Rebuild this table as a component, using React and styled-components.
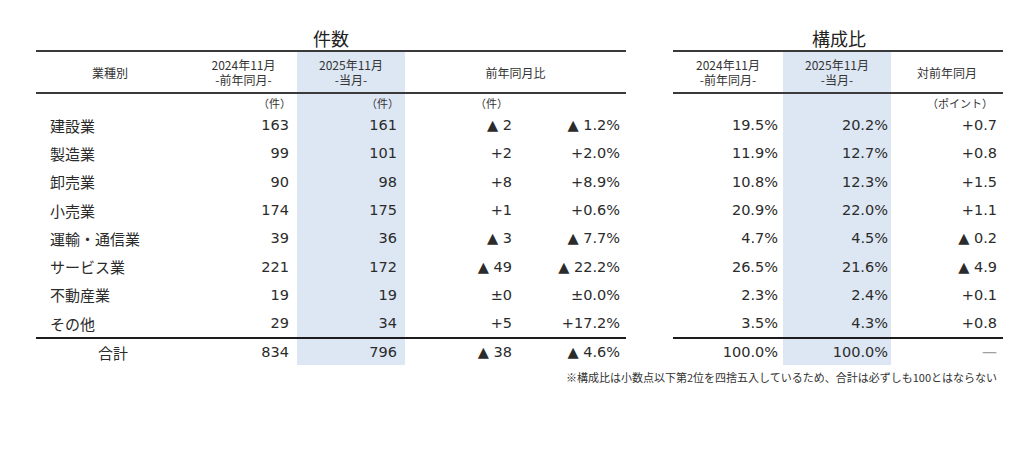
import React from "react";
import styled, { createGlobalStyle } from "styled-components";

const GlobalStyle = createGlobalStyle`
  html, body {
    margin: 0;
    background: #fff;
  }
  body {
    font-family: "DejaVu Sans", "Noto Sans CJK JP", sans-serif;
    color: #2b2b2b;
  }
`;

const JP = `"Noto Sans CJK JP", "Noto Sans", sans-serif`;
const NUM = `"DejaVu Sans", "Noto Sans CJK JP", sans-serif`;
const BLUE = "#dde7f3";

const Page = styled.div`
  width: 1034px;
  height: 452px;
  padding: 26px 0 0 36px;
  box-sizing: border-box;
`;

const Tables = styled.div`
  display: flex;
  gap: 47px;
`;

const Block = styled.div`
  display: flex;
  flex-direction: column;
`;

const Title = styled.div`
  height: 24px;
  line-height: 24px;
  text-align: center;
  font-family: ${JP};
  font-size: 18px;
  font-weight: 400;
  color: #222;
  padding-left: ${(p) => p.$shift || 0}px;
`;

const Row = styled.div`
  display: grid;
  grid-template-columns: ${(p) => p.$cols};
`;

const HeadRow = styled(Row)`
  height: 40px;
  border-top: 2px solid #3a3a3a;
  border-bottom: 2px solid #3a3a3a;
  font-family: ${JP};
  font-size: 12px;
  line-height: 15px;
  color: #333;
`;

const UnitRow = styled(Row)`
  height: 17px;
  font-family: ${JP};
  font-size: 11px;
  color: #333;
`;

const DataRow = styled(Row)`
  height: 28.3px;
  font-family: ${NUM};
  font-size: 14.5px;
`;

const TotalRow = styled(Row)`
  height: 26px;
  border-top: 2.5px solid #1c1c1c;
  font-family: ${NUM};
  font-size: 14.5px;
`;

const Cell = styled.div`
  display: flex;
  align-items: center;
  justify-content: ${(p) =>
    p.$align === "left" ? "flex-start" : p.$align === "center" ? "center" : "flex-end"};
  text-align: center;
  padding: 0 ${(p) => p.$pr || 0}px 0 ${(p) => p.$pl || 0}px;
  grid-column: ${(p) => (p.$span ? `span ${p.$span}` : "auto")};
  background: ${(p) => (p.$blue ? BLUE : "transparent")};
  white-space: nowrap;
`;

const Label = styled(Cell)`
  font-family: ${JP};
  font-size: 15px;
  color: #2b2b2b;
`;

const Dash = styled.span`
  color: #a0a0a0;
  font-family: ${NUM};
  font-size: 15px;
`;

const Note = styled.div`
  width: 967px;
  margin-top: 4px;
  padding-right: 6px;
  box-sizing: border-box;
  text-align: right;
  font-family: ${JP};
  font-size: 11px;
  line-height: 16px;
  color: #333;
`;

const LEFT_COLS = "154px 107px 108px 107px 114px";
const RIGHT_COLS = "110px 108px 112px";

const rows = [
  ["建設業", "163", "161", "▲ 2", "▲ 1.2%", "19.5%", "20.2%", "+0.7"],
  ["製造業", "99", "101", "+2", "+2.0%", "11.9%", "12.7%", "+0.8"],
  ["卸売業", "90", "98", "+8", "+8.9%", "10.8%", "12.3%", "+1.5"],
  ["小売業", "174", "175", "+1", "+0.6%", "20.9%", "22.0%", "+1.1"],
  ["運輸・通信業", "39", "36", "▲ 3", "▲ 7.7%", "4.7%", "4.5%", "▲ 0.2"],
  ["サービス業", "221", "172", "▲ 49", "▲ 22.2%", "26.5%", "21.6%", "▲ 4.9"],
  ["不動産業", "19", "19", "±0", "±0.0%", "2.3%", "2.4%", "+0.1"],
  ["その他", "29", "34", "+5", "+17.2%", "3.5%", "4.3%", "+0.8"],
];

const CountTable = () => (
  <Block>
    <Title>件数</Title>
    <HeadRow $cols={LEFT_COLS}>
      <Cell $align="center" $pr={6}>業種別</Cell>
      <Cell $align="center">
        2024年11月
        <br />
        -前年同月-
      </Cell>
      <Cell $align="center" $blue>
        2025年11月
        <br />
        -当月-
      </Cell>
      <Cell $align="center" $span={2}>前年同月比</Cell>
    </HeadRow>
    <UnitRow $cols={LEFT_COLS}>
      <Cell />
      <Cell $pr={6}>（件）</Cell>
      <Cell $pr={6} $blue>（件）</Cell>
      <Cell $pr={4}>（件）</Cell>
      <Cell />
    </UnitRow>
    {rows.map((r) => (
      <DataRow $cols={LEFT_COLS} key={r[0]}>
        <Label $align="left" $pl={14}>{r[0]}</Label>
        <Cell $pr={8}>{r[1]}</Cell>
        <Cell $pr={8} $blue>{r[2]}</Cell>
        <Cell $pr={0}>{r[3]}</Cell>
        <Cell $pr={6}>{r[4]}</Cell>
      </DataRow>
    ))}
    <TotalRow $cols={LEFT_COLS}>
      <Label $align="center">合計</Label>
      <Cell $pr={8}>834</Cell>
      <Cell $pr={8} $blue>796</Cell>
      <Cell $pr={0}>▲ 38</Cell>
      <Cell $pr={6}>▲ 4.6%</Cell>
    </TotalRow>
  </Block>
);

const RatioTable = () => (
  <Block>
    <Title $shift={2}>構成比</Title>
    <HeadRow $cols={RIGHT_COLS}>
      <Cell $align="center">
        2024年11月
        <br />
        -前年同月-
      </Cell>
      <Cell $align="center" $blue>
        2025年11月
        <br />
        -当月-
      </Cell>
      <Cell $align="center">対前年同月</Cell>
    </HeadRow>
    <UnitRow $cols={RIGHT_COLS}>
      <Cell />
      <Cell $blue />
      <Cell $pr={10}>（ポイント）</Cell>
    </UnitRow>
    {rows.map((r) => (
      <DataRow $cols={RIGHT_COLS} key={r[0]}>
        <Cell $pr={5}>{r[5]}</Cell>
        <Cell $pr={3} $blue>{r[6]}</Cell>
        <Cell $pr={6}>{r[7]}</Cell>
      </DataRow>
    ))}
    <TotalRow $cols={RIGHT_COLS}>
      <Cell $pr={5}>100.0%</Cell>
      <Cell $pr={3} $blue>100.0%</Cell>
      <Cell $pr={6}>
        <Dash>—</Dash>
      </Cell>
    </TotalRow>
  </Block>
);

export default function App() {
  return (
    <>
      <GlobalStyle />
      <Page>
        <Tables>
          <CountTable />
          <RatioTable />
        </Tables>
        <Note>※構成比は小数点以下第2位を四捨五入しているため、合計は必ずしも100とはならない</Note>
      </Page>
    </>
  );
}
